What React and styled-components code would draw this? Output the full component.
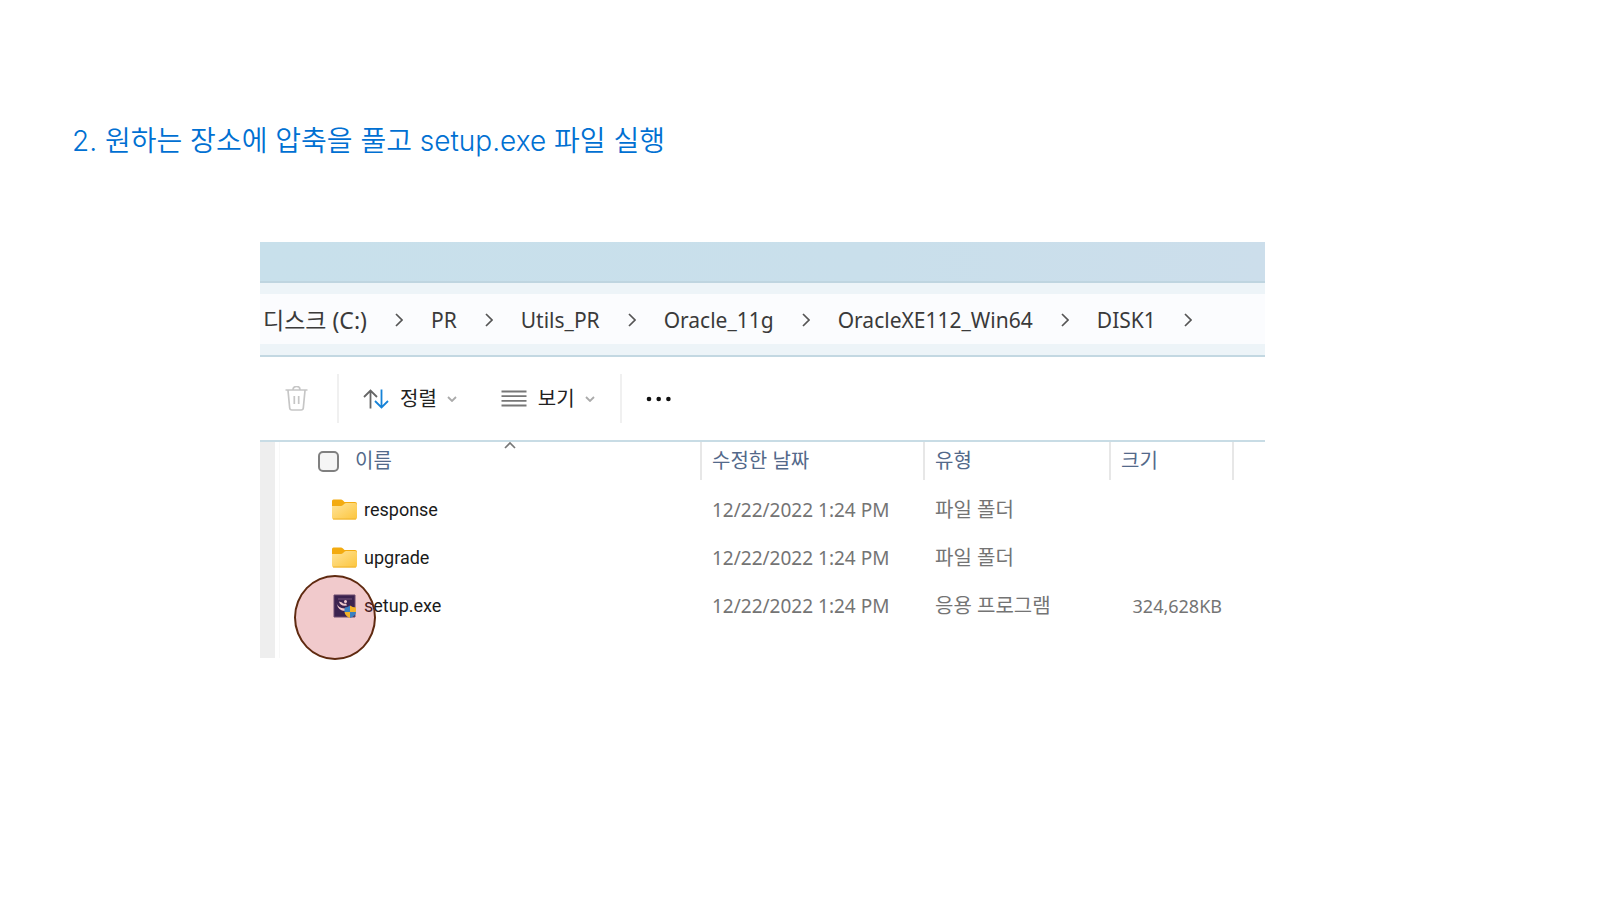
import React from "react";
import styled, { createGlobalStyle } from "styled-components";

const GlobalStyle = createGlobalStyle`
  * {
    box-sizing: border-box;
  }
  body {
    margin: 0;
    background-color: #fff;
    font-family: "Noto Sans", "Noto Sans CJK KR", sans-serif;
  }
`;

const Slide = styled.main`
  min-height: 100vh;
  padding: 121px 335px 40px 72px;
`;
const Title = styled.h1`
  margin: 0;
  font-family: Inter, "Noto Sans CJK KR", sans-serif;
  font-size: 28px;
  font-weight: 350;
  line-height: 40px;
  color: #0070d2;
`;
const Explorer = styled.section`
  margin: 81px 0 0 188px;
`;
const TitleBar = styled.div`
  height: 41px;
  background: linear-gradient(90deg, #c8e0eb, #c9dfeb 60%, #ccdeeb);
  border-bottom: 2px solid #bfd5e0;
`;
const AddressBar = styled.nav`
  padding: 11px 0;
  background-color: #edf4f8;
  border-bottom: 2px solid #c3d8e2;
`;
const Crumbs = styled.ol`
  display: flex;
  align-items: center;
  height: 50px;
  margin: 0;
  padding: 2px 0 0 3px;
  list-style: none;
  background-color: #fbfcfe;
`;
const Crumb = styled.li`
  display: flex;
  align-items: center;
  gap: 28px;
  margin-right: 28px;
  font-size: 21px;
  line-height: 28px;
  white-space: nowrap;
  &:first-child {
    font-size: 23px;
  }
`;
const CrumbLink = styled.a`
  color: #3a3a3a;
  text-decoration: none;
`;
const Toolbar = styled.div`
  display: flex;
  align-items: center;
  height: 85px;
  padding-left: 25px;
  border-bottom: 2px solid #c8dce5;
`;
const ToolButton = styled.button`
  display: flex;
  align-items: center;
  gap: 10px;
  margin: 0;
  padding: 0;
  border: 0;
  background: none;
  font-family: inherit;
  font-size: 20px;
  line-height: 28px;
  color: #222;
  white-space: nowrap;
  & + & {
    margin-left: 44px;
  }
`;
const Divider = styled.span`
  width: 2px;
  height: 49px;
  margin: 0 24px 0 ${props => props.$before}px;
  background-color: #f0f0f0;
`;
const Content = styled.div`
  display: flex;
  min-height: 216px;
`;
const Gutter = styled.div`
  flex: none;
  width: 20px;
  margin-right: 38px;
  border-right: 1px solid #f8f8f8;
  background: linear-gradient(90deg, #eee 15px, #fff 15px);
`;
const Files = styled.table`
  flex: 1;
  align-self: flex-start;
  table-layout: fixed;
  border-collapse: collapse;
  font-size: 20px;
  line-height: 28px;
  color: #747474;
  white-space: nowrap;
`;
const HeadCell = styled.th`
  position: relative;
  width: ${props => props.$width || "auto"};
  height: 38px;
  padding: 0 0 0 ${props => (props.$first ? 0 : 10)}px;
  border-right: ${props => (props.$last ? "0" : "2px solid #e7e7e7")};
  font-weight: 400;
  text-align: left;
  color: #53698a;
`;
const HeadLabel = styled.label`
  display: flex;
  align-items: center;
  gap: 16px;
`;
const CheckBox = styled.input`
  appearance: none;
  width: 21px;
  height: 21px;
  margin: 0;
  border: 2px solid #808080;
  border-radius: 5px;
  background-color: #f5f5f5;
`;
const SortMark = styled.svg`
  position: absolute;
  top: -1px;
  left: 50%;
  margin-left: -5px;
`;
const Body = styled.tbody`
  &::before {
    content: "";
    display: block;
    height: 6px;
  }
`;
const Cell = styled.td`
  height: 48px;
  padding: 0 11px;
  font-size: ${props => props.$size || 20}px;
  text-align: ${props => props.$align || "left"};
`;
const FileName = styled.a`
  display: flex;
  align-items: center;
  gap: 7px;
  padding-left: 3px;
  font-family: Roboto, sans-serif;
  font-size: 18px;
  color: #1a1a1a;
  text-decoration: none;
`;
const FileIcon = styled.span`
  position: relative;
  display: flex;
  width: 25px;
`;
// ring around the file to run, it lies over the icon and part of the name
const Marker = styled.span`
  position: absolute;
  top: -19px;
  left: -38px;
  width: 82px;
  height: 85px;
  border: 2px solid #5f2a10;
  border-radius: 50%;
  background-color: rgba(199, 43, 51, 0.25);
`;

const CrumbArrow = () => (
  <svg width="8" height="14" viewBox="0 0 8 14" fill="none" stroke="#555" strokeWidth="1.7">
    <path d="M1 1l6 6-6 6" />
  </svg>
);

const DownArrow = () => (
  <svg width="10" height="6" viewBox="0 0 10 6" fill="none" stroke="#aaa" strokeWidth="1.8">
    <path d="M1 1l4 4 4-4" />
  </svg>
);

const TrashIcon = () => (
  <svg width="23" height="26" viewBox="0 0 23 26" fill="none" stroke="#c6c6c6" strokeWidth="1.7">
    <path d="M0.5 4h22M8 3.500c0-4 7-4 7 0M3 4.500l1.700 17.500q.2 2 2.200 2h9.200q2 0 2.200-2L20 4.500M9.300 10v8M13.700 10v8" />
  </svg>
);

const SortIcon = () => (
  <svg width="27" height="20" viewBox="0 0 27 20" fill="none" strokeWidth="1.8">
    <path stroke="#666" d="M7.500 19.500V1.500M1 8l6.500-6.500L14 8" />
    <path stroke="#1683d8" d="M18.500 0.500v18M12 12l6.500 6.500L25 12" />
  </svg>
);

const ListIcon = () => (
  <svg width="27" height="18" viewBox="0 0 27 18" stroke="#777" strokeWidth="1.8">
    <path d="M0.500 1.500h25M0.500 6.200h25M0.500 10.800h25M0.500 15.500h25" />
  </svg>
);

const MoreIcon = () => (
  <svg width="26" height="6" viewBox="0 0 26 6" fill="#111">
    <circle cx="3" cy="3" r="2.300" />
    <circle cx="12.700" cy="3" r="2.300" />
    <circle cx="22.400" cy="3" r="2.300" />
  </svg>
);

const FolderIcon = () => (
  <svg width="25" height="23" viewBox="0 0 25 23">
    <defs>
      <linearGradient id="folder" x1="0" y1="0" x2="1" y2="1">
        <stop offset="0" stopColor="#ffe49a" />
        <stop offset="1" stopColor="#fcc53c" />
      </linearGradient>
    </defs>
    <path fill="#f3ab10" d="M0 2Q0 .5 1.500 .5H9q1 0 1.700.7L12.500 3H23q2 0 2 2v5H0z" />
    <path fill="url(#folder)" d="M0 7h9q1 0 1.800-.8l1.600-1.500q.8-.7 1.800-.7H23q2 0 2 2v12.500q0 2-2 2H2q-2 0-2-2z" />
    <path stroke="#eeb22c" d="M1 20h23" />
  </svg>
);

const SetupIcon = () => (
  <svg width="25" height="24" viewBox="0 0 25 24">
    <path fill="#0d2059" stroke="#4c5580" d="M2 1h21v22H2z" />
    <path fill="none" stroke="#5a6590" d="M6 5h14" />
    <path fill="#fff" d="M4.500 9q2 7 12 5l-2 3q-8 1-10-8zM7 7.500q1 5 8 4l-1-2q-3 1-4-1z" />
    <circle cx="13.500" cy="7.500" r="1.500" fill="#fff" />
    <path fill="#0a9cf0" d="M13 13.500q2.500 0 5-2V18h-5.500q-.5-2 .5-4.500z" />
    <path fill="#ffdf25" d="M18 11.500q2.500 2 6 2V18h-6zM12.500 18H18v6q-5-2-5.500-6z" />
    <path fill="#0a9cf0" d="M18 18h6q-.5 4-6 6z" />
  </svg>
);

const crumbs = ["디스크 (C:)", "PR", "Utils_PR", "Oracle_11g", "OracleXE112_Win64", "DISK1"];

const files = [
  { name: "response", date: "12/22/2022 1:24 PM", type: "파일 폴더", size: "" },
  { name: "upgrade", date: "12/22/2022 1:24 PM", type: "파일 폴더", size: "" },
  {
    name: "setup.exe",
    date: "12/22/2022 1:24 PM",
    type: "응용 프로그램",
    size: "324,628KB",
    marked: true
  }
];

const FileRow = ({ file }) => (
  <tr>
    <Cell>
      <FileName href="#">
        <FileIcon>
          {file.marked ? <SetupIcon /> : <FolderIcon />}
          {file.marked && <Marker />}
        </FileIcon>
        {file.name}
      </FileName>
    </Cell>
    <Cell $size={19}>{file.date}</Cell>
    <Cell>{file.type}</Cell>
    <Cell $size={18} $align="right">
      {file.size}
    </Cell>
    <Cell />
  </tr>
);

const App = () => (
  <Slide>
    <GlobalStyle />
    <Title>2. 원하는 장소에 압축을 풀고 setup.exe 파일 실행</Title>
    <Explorer>
      <TitleBar />
      <AddressBar>
        <Crumbs>
          {crumbs.map(name => (
            <Crumb key={name}>
              <CrumbLink href="#">{name}</CrumbLink>
              <CrumbArrow />
            </Crumb>
          ))}
        </Crumbs>
      </AddressBar>
      <Toolbar>
        <ToolButton aria-label="삭제">
          <TrashIcon />
        </ToolButton>
        <Divider $before={29} />
        <ToolButton>
          <SortIcon />
          정렬
          <DownArrow />
        </ToolButton>
        <ToolButton>
          <ListIcon />
          보기
          <DownArrow />
        </ToolButton>
        <Divider $before={25} />
        <ToolButton aria-label="더 보기">
          <MoreIcon />
        </ToolButton>
      </Toolbar>
      <Content>
        <Gutter />
        <Files>
          <thead>
            <tr>
              <HeadCell $first>
                <HeadLabel>
                  <CheckBox type="checkbox" />
                  이름
                </HeadLabel>
                <SortMark width="12" height="8" viewBox="0 0 12 8" fill="none" stroke="#777" strokeWidth="1.700">
                  <path d="M1 7l5-5 5 5" />
                </SortMark>
              </HeadCell>
              <HeadCell $width="223px">수정한 날짜</HeadCell>
              <HeadCell $width="186px">유형</HeadCell>
              <HeadCell $width="123px">크기</HeadCell>
              <HeadCell $width="32px" $last />
            </tr>
          </thead>
          <Body>
            {files.map(file => (
              <FileRow key={file.name} file={file} />
            ))}
          </Body>
        </Files>
      </Content>
    </Explorer>
  </Slide>
);

export default App;
